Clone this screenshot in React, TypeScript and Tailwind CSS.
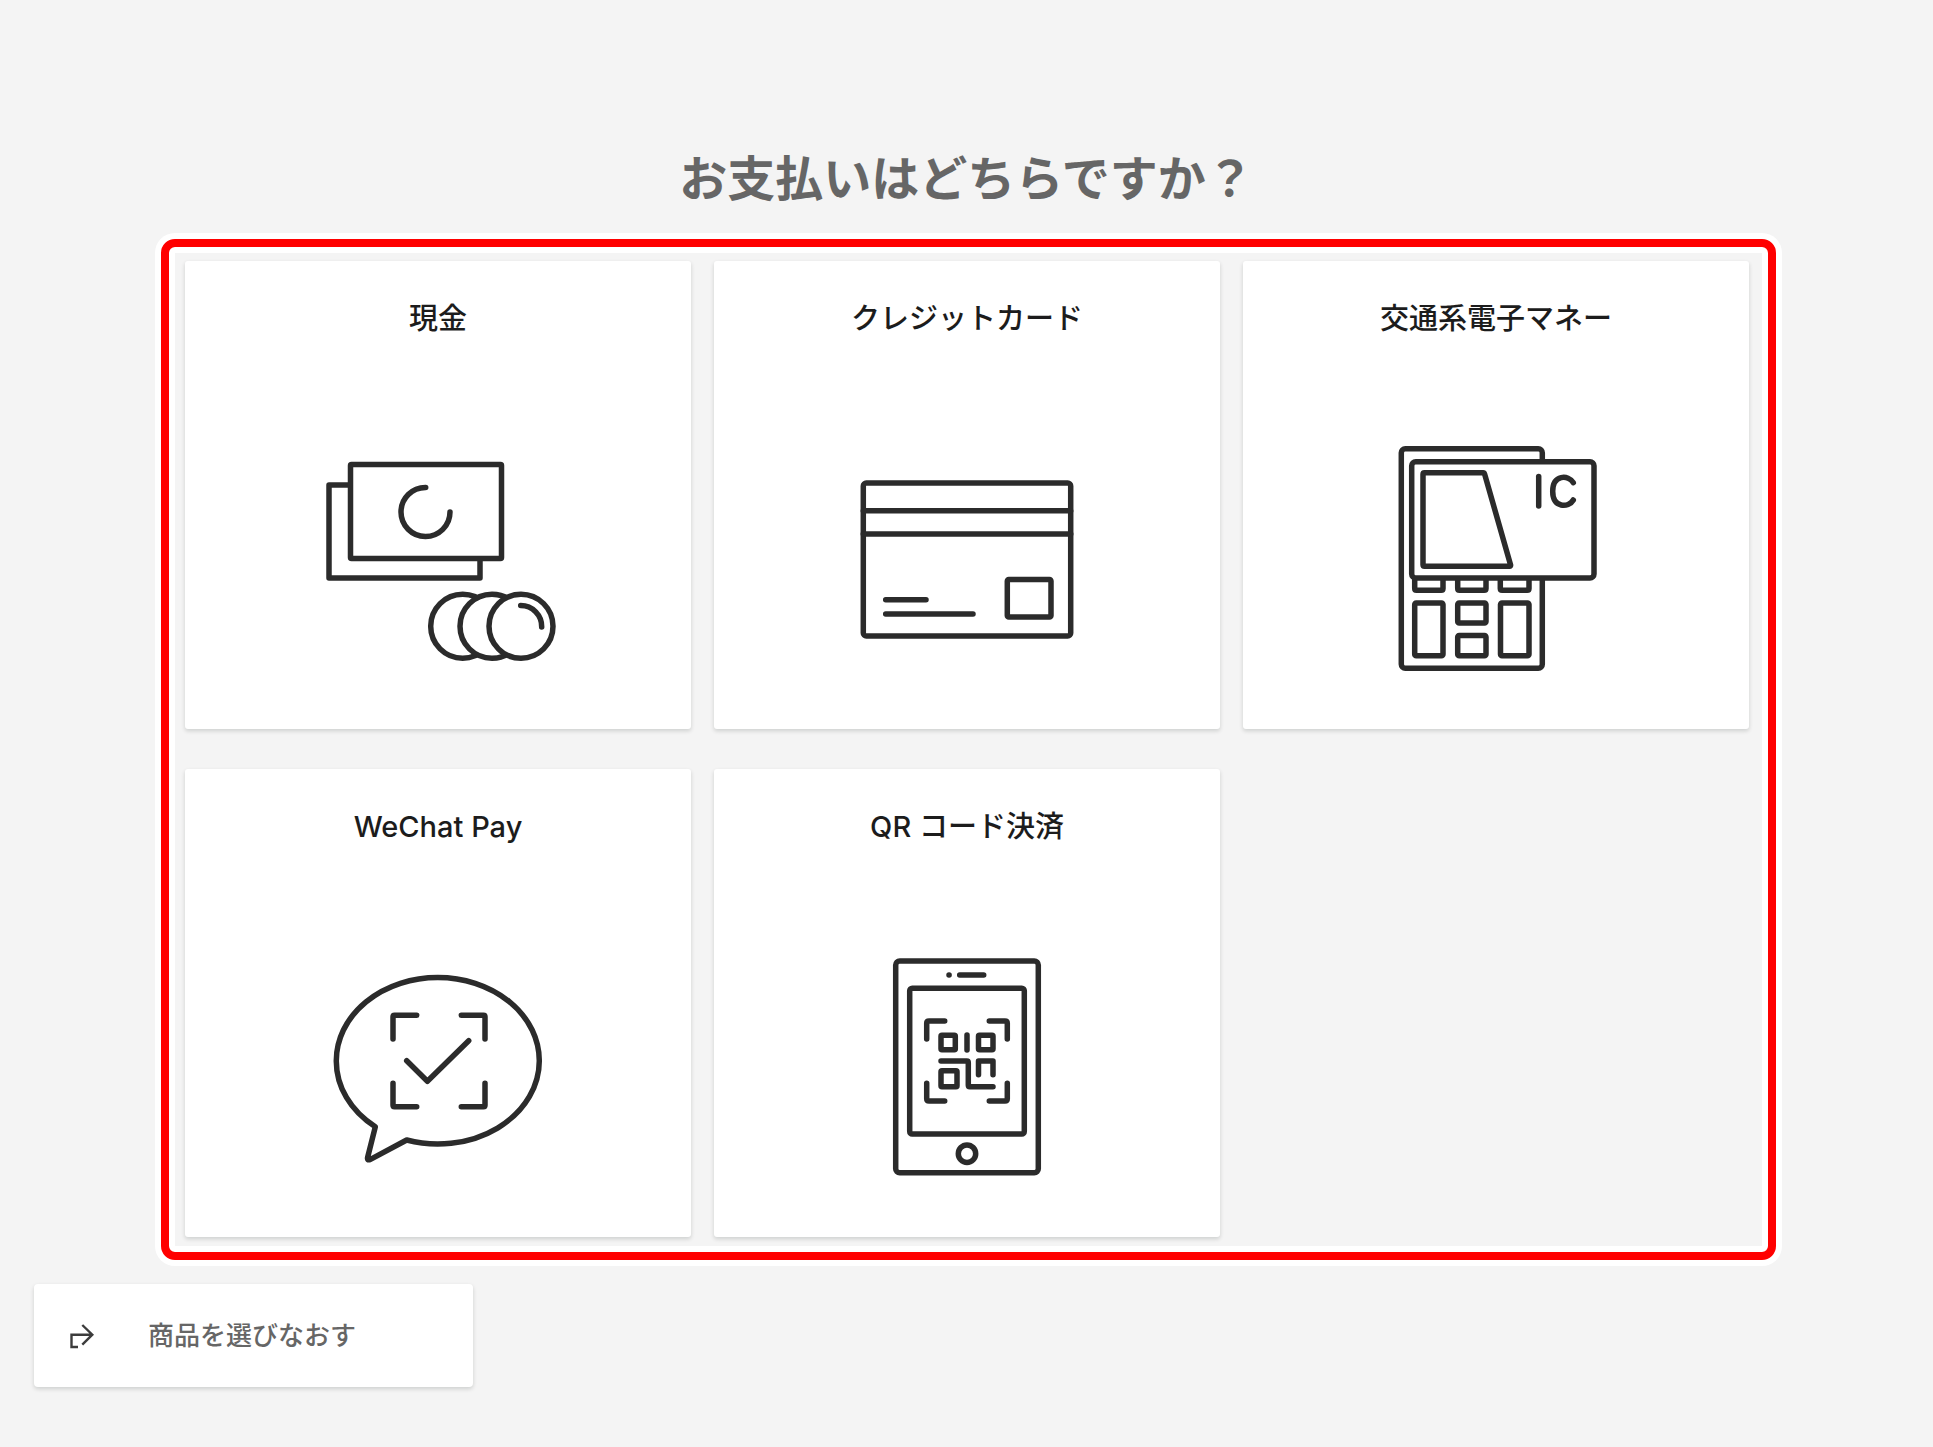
import React from "react";

const CashIcon = () => (
  <>
    <path d="M32 44H11V137H162V118" />
    <rect x="32.5" y="23.5" width="151" height="94" rx="1" />
    <path d="M132 71A24.5 24.5 0 1 1 107.7 46.5" />
    <circle cx="144.7" cy="185.3" r="32" />
    <circle cx="174" cy="185.3" r="32" fill="#fff" />
    <circle cx="203" cy="185.3" r="32" fill="#fff" />
    <path d="M202.7 164.5A21 21 0 0 1 223.7 186" />
  </>
);

const CreditCardIcon = () => (
  <>
    <rect x="16.3" y="42" width="207.4" height="153" rx="3" />
    <path d="M16.3 69.7H223.7M16.3 93H223.7" />
    <rect x="160.3" y="138.5" width="43.7" height="37.5" rx="1.5" />
    <path d="M38.7 158.7H79M38.7 173H126" />
  </>
);

const TerminalIcon = () => (
  <>
    <rect x="25.3" y="7.7" width="141" height="219.6" rx="4" />
    <path d="M38.7 137V147.5Q38.7 149.3 40.5 149.3H65.2Q67 149.3 67 147.5V137" />
    <path d="M81.7 137V147.5Q81.7 149.3 83.5 149.3H108.2Q110 149.3 110 147.5V137" />
    <path d="M124.3 137V147.5Q124.3 149.3 126.1 149.3H151.2Q153 149.3 153 147.5V137" />
    <rect x="38.7" y="162" width="28.3" height="52.7" rx="1.5" />
    <rect x="81.7" y="162" width="28.3" height="20" rx="1.5" />
    <rect x="81.7" y="194.5" width="28.3" height="20.2" rx="1.5" />
    <rect x="124.5" y="162" width="28.5" height="52.7" rx="1.5" />
    <rect x="35.7" y="20.7" width="182.3" height="116.3" rx="4" fill="#fff" />
    <path d="M48.5 31.7H107.2Q108.2 31.7 108.6 33L134.6 124Q134.8 125.3 133.5 125.3H48.5Q47 125.3 47 123.8V33.2Q47 31.7 48.5 31.7Z" />
    <path d="M162.7 35.5V65" />
    <path d="M197.3 41.7C192.5 33.5 176.7 33.5 176.7 50.3S192.5 67.2 197.3 59" />
  </>
);

const ChatIcon = () => (
  <>
    <path d="M57.3 177.8A101.5 83.3 0 0 1 18.3 111.7A101.5 83.3 0 0 1 221.3 111.7A101.5 83.3 0 0 1 88.7 191L52 210.6Q49 211.6 49.6 208.5Z" />
    <path d="M98.7 66.3H76.5Q75 66.3 75 67.8V90M143.3 66.3H165.5Q167 66.3 167 67.8V90M75 134.3V156.2Q75 157.7 76.5 157.7H98.7M167 134.3V156.2Q167 157.7 165.5 157.7H143.3" />
    <path d="M88.7 111.7L109.4 132.3L150.7 91.7" />
  </>
);

const PhoneIcon = () => (
  <>
    <rect x="48.7" y="12" width="142.6" height="211.7" rx="4" />
    <rect x="62.7" y="39.3" width="114.6" height="145.7" rx="2.5" />
    <path d="M102 26H102.1M112.7 26H136.7" />
    <circle cx="120" cy="204.7" r="8.7" />
    <path d="M97.7 72H82Q79.7 72 79.7 74.3V90M142.3 72H158Q160.3 72 160.3 74.3V90M79.7 134.3V149.7Q79.7 152 82 152H97.7M160.3 134.3V149.7Q160.3 152 158 152H142.3" />
    <rect x="94" y="86.3" width="14.3" height="14.5" rx="1" />
    <rect x="131.5" y="86.3" width="14.5" height="14.5" rx="1" />
    <rect x="94" y="121.7" width="16" height="16" rx="1" />
    <path d="M120 86V101M94 112H119.8Q121.3 112 121.3 113.5V136.2Q121.3 137.7 122.8 137.7H146M131.5 125.7V112H146V125.7" />
  </>
);

const methods = [
  { id: "cash", label: "現金", icon: CashIcon },
  { id: "credit", label: "クレジットカード", icon: CreditCardIcon },
  { id: "ic", label: "交通系電子マネー", icon: TerminalIcon },
  { id: "wechat", label: "WeChat Pay", icon: ChatIcon },
  { id: "qr", label: "QR コード決済", icon: PhoneIcon },
];

interface IPaymentCardProps {
  label: string;
  icon: React.FC;
}

const PaymentCard = (props: IPaymentCardProps) => {
  const { label, icon: Icon } = props;
  return (
    <button type="button" className="flex flex-col items-center rounded-[3px] bg-white pt-[38px] pb-12 shadow-[0_2px_4px_rgba(0,20,10,0.16)]">
      <span className="text-[29px] leading-[40px] font-medium text-[#1c1c1c]">{label}</span>
      <svg viewBox="0 0 240 240" className="mt-[102px] size-[240px]" fill="none" stroke="#2b2b2b" strokeWidth="5.5" strokeLinecap="round" strokeLinejoin="round" aria-hidden="true">
        <Icon />
      </svg>
    </button>
  );
};

const App = () => {
  return (
    <div className="min-h-screen bg-[#f4f4f4] pt-[143px] pb-[60px] font-['Inter','Noto_Sans_CJK_JP',sans-serif]">
      <h1 className="text-center text-[48px] leading-[72px] font-semibold text-[#666]">お支払いはどちらですか？</h1>

      <main className="mt-[18px] mr-[151px] ml-[155px] rounded-[20px] bg-white p-[6px]">
        <div className="rounded-[14px] border-8 border-[#ff0000] bg-white p-[6px]">
          <div className="grid grid-cols-3 gap-x-[23px] gap-y-[40px] bg-[#f4f4f4] pt-2 pr-[13px] pb-[9px] pl-[10px]">
            {methods.map((method) => (
              <PaymentCard key={method.id} label={method.label} icon={method.icon} />
            ))}
          </div>
        </div>
      </main>

      <button type="button" className="mt-[18px] ml-[34px] flex h-[103px] w-[439px] items-center rounded-[4px] bg-white pl-[34px] shadow-[0_2px_4px_rgba(0,20,10,0.16)]">
        <svg viewBox="0 0 28 28" className="size-7" fill="none" stroke="#3c3c3c" strokeWidth="2.4" aria-hidden="true">
          <path d="M10 25H3.5V12.7H24M14.3 3L24.3 12.7L14.3 22.7" />
        </svg>
        <span className="ml-[52px] text-[26px] leading-[40px] font-medium text-[#666]">商品を選びなおす</span>
      </button>
    </div>
  );
};

export default App;
